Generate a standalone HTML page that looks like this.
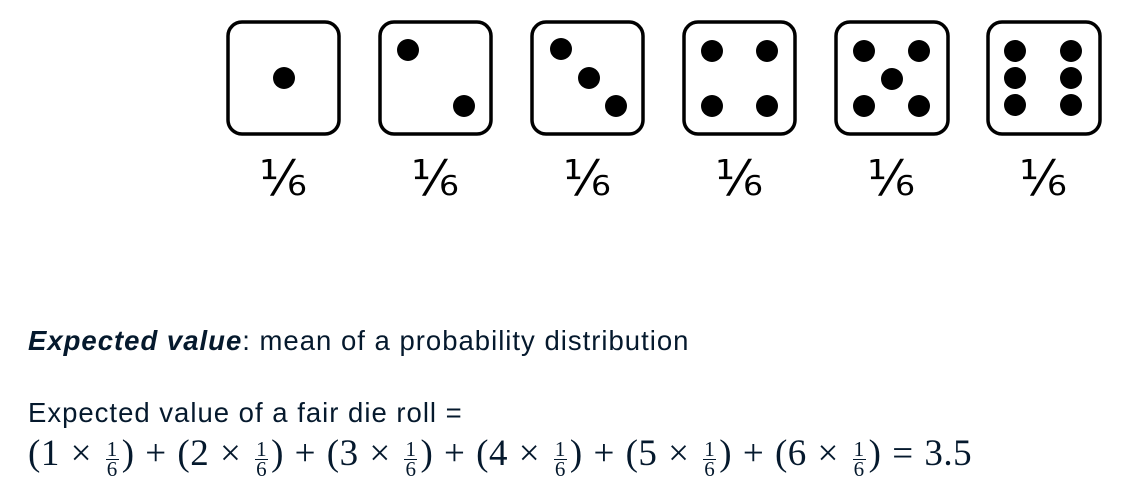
<!DOCTYPE html>
<html><head><style>
body{margin:0;width:1139px;height:488px;background:#fff;position:relative;overflow:hidden;font-family:"Liberation Sans",sans-serif;color:#05192d}
.fr{position:absolute;top:150px;font-size:49px;width:100px;text-align:center;color:#000;font-family:"DejaVu Sans","Liberation Sans",sans-serif}
.t{position:absolute;left:28px;font-size:27.5px;letter-spacing:1px;white-space:nowrap}
.m{position:absolute;left:28px;top:432px;font-family:"Liberation Serif",serif;font-size:37px;letter-spacing:0.5px;word-spacing:1px;white-space:nowrap;color:#05192d}
.f{display:inline-block;vertical-align:middle;text-align:center;font-size:21px;line-height:19px;margin:0 3px;position:relative;top:3px}
.f span{display:block}
.f .n{border-bottom:1px solid #05192d;padding:0 1px}
</style></head><body>
<svg width="1139" height="145" style="position:absolute;left:0;top:0">
<g fill="#fff" stroke="#000" stroke-width="3.5">
<rect x="228" y="22" width="111" height="112" rx="14"/>
<rect x="380" y="22" width="111" height="112" rx="14"/>
<rect x="532" y="22" width="111" height="112" rx="14"/>
<rect x="684" y="22" width="111" height="112" rx="14"/>
<rect x="836" y="22" width="112" height="112" rx="14"/>
<rect x="988" y="22" width="112" height="112" rx="14"/>
</g>
<g fill="#000">
<circle cx="284" cy="78" r="11"/>
<circle cx="408" cy="50" r="11"/><circle cx="464" cy="106" r="11"/>
<circle cx="561" cy="49" r="11"/><circle cx="589" cy="78" r="11"/><circle cx="616" cy="106" r="11"/>
<circle cx="712" cy="51" r="11"/><circle cx="767" cy="51" r="11"/><circle cx="712" cy="106" r="11"/><circle cx="767" cy="106" r="11"/>
<circle cx="864" cy="51" r="11"/><circle cx="919" cy="51" r="11"/><circle cx="892" cy="79" r="11"/><circle cx="864" cy="106" r="11"/><circle cx="919" cy="106" r="11"/>
<circle cx="1015" cy="51" r="11"/><circle cx="1071" cy="51" r="11"/><circle cx="1015" cy="78" r="11"/><circle cx="1071" cy="78" r="11"/><circle cx="1015" cy="105" r="11"/><circle cx="1071" cy="105" r="11"/>
</g></svg>
<div class="fr" style="left:233px">⅙</div>
<div class="fr" style="left:385px">⅙</div>
<div class="fr" style="left:537px">⅙</div>
<div class="fr" style="left:689px">⅙</div>
<div class="fr" style="left:841px">⅙</div>
<div class="fr" style="left:993px">⅙</div>
<div class="t" style="top:325px"><b><i>Expected value</i></b>: mean of a probability distribution</div>
<div class="t" style="top:397px">Expected value of a fair die roll =</div>
<div class="m">(1 × <span class="f"><span class="n">1</span><span>6</span></span>) + (2 × <span class="f"><span class="n">1</span><span>6</span></span>) + (3 × <span class="f"><span class="n">1</span><span>6</span></span>) + (4 × <span class="f"><span class="n">1</span><span>6</span></span>) + (5 × <span class="f"><span class="n">1</span><span>6</span></span>) + (6 × <span class="f"><span class="n">1</span><span>6</span></span>) = 3.5</div>
</body></html>
